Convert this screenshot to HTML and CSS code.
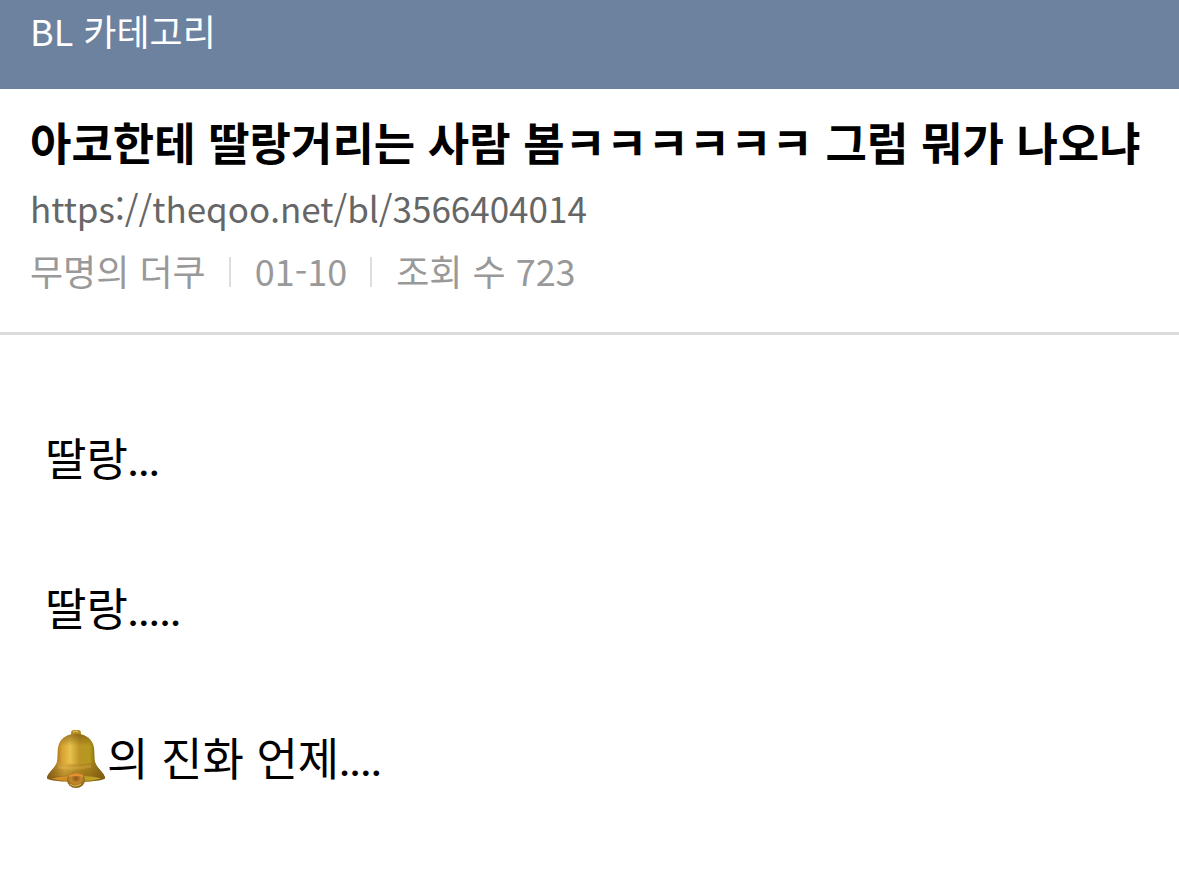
FILE: index.html
```html
<!DOCTYPE html>
<html lang="ko">
<head>
<meta charset="UTF-8">
<meta name="viewport" content="width=device-width, initial-scale=1">
<title>BL 카테고리</title>
<link rel="stylesheet" href="styles.css">
</head>
<body>
<header class="board-bar">BL 카테고리</header>
<main>
    <article>
        <div class="post-head">
            <h1>아코한테 딸랑거리는 사람 봄ㅋㅋㅋㅋㅋㅋ 그럼 뭐가 나오냐</h1>
            <a class="post-url" href="https://theqoo.net/bl/3566404014">https://theqoo.net/bl/3566404014</a>
            <div class="post-meta">
                <span>무명의 더쿠</span>
                <span>01-10</span>
                <span>조회 수 723</span>
            </div>
        </div>
        <div class="post-body">
            <p>딸랑<span class="dots">...</span></p>
            <p>딸랑<span class="dots">.....</span></p>
            <p><svg class="bell" viewBox="0 0 60 60" role="img" aria-label="종">
                <defs>
                    <linearGradient id="gold" x1="0" x2="1">
                        <stop offset=".12" stop-color="#8f6418"/>
                        <stop offset=".26" stop-color="#d9a133"/>
                        <stop offset=".4" stop-color="#e8c24c"/>
                        <stop offset=".56" stop-color="#bd9426"/>
                        <stop offset=".74" stop-color="#b39a1c"/>
                        <stop offset=".88" stop-color="#75590f"/>
                    </linearGradient>
                    <linearGradient id="rim" x1="0" x2="1">
                        <stop offset="0" stop-color="#8a6218"/>
                        <stop offset=".3" stop-color="#e0af40"/>
                        <stop offset=".6" stop-color="#b98a20"/>
                        <stop offset="1" stop-color="#8c6a18"/>
                    </linearGradient>
                    <linearGradient id="shade" x1="0" y1="0" x2="0" y2="1">
                        <stop offset="0" stop-color="#6f4d0b" stop-opacity=".6"/>
                        <stop offset=".25" stop-color="#6f4d0b" stop-opacity="0"/>
                        <stop offset=".6" stop-color="#6f4d0b" stop-opacity="0"/>
                        <stop offset="1" stop-color="#6f4d0b" stop-opacity=".5"/>
                    </linearGradient>
                    <radialGradient id="clapper" cx=".5" cy=".4" r=".6">
                        <stop offset="0" stop-color="#8b5318"/>
                        <stop offset=".5" stop-color="#c58a2c"/>
                        <stop offset="1" stop-color="#7d5c14"/>
                    </radialGradient>
                </defs>
                <rect x="25" y="1" width="10" height="8" rx="3" fill="#b18b22"/>
                <path d="M27 3q3-2 5 0" fill="none" stroke="#eed06b" stroke-width="1"/>
                <path d="M11 33C12 26 11 20 13 15C16 8 22 5 30 5S44 8 47 15C49 20 48 26 49 33C51 40 59 44 59 49.500C53 54 7 54 1 49.500C1 44 9 40 11 33Z" fill="url(#gold)"/>
                <path d="M11 33Q30 38 49 33C51 40 59 44 59 49.500Q30 42 1 49.500C1 44 9 40 11 33Z" fill="url(#rim)" opacity=".85"/>
                <path d="M11 33C12 26 11 20 13 15C16 8 22 5 30 5S44 8 47 15C49 20 48 26 49 33C51 40 59 44 59 49.500C53 54 7 54 1 49.500C1 44 9 40 11 33Z" fill="url(#shade)"/>
                <path d="M12 38Q28 41 45 37" fill="none" stroke="#edcd66" stroke-width="3" opacity=".25"/>
                <path d="M2 49.500Q30 43 58 49.500Q30 56 2 49.500Z" fill="#8d6518"/>
                <path d="M5 49.500Q18 46 29 47L25 52Q14 52 5 49.500Z" fill="#d18e2b"/>
                <path d="M36 47Q49 47 55 49.500Q47 52 37 52Z" fill="#bba025"/>
                <ellipse cx="30" cy="51" rx="9" ry="8" fill="url(#clapper)"/>
                <path d="M23 47Q30 45 37 47" fill="none" stroke="#e7912f" stroke-width="2"/>
                <path d="M24 55Q29 59 35 55" fill="none" stroke="#dfbd55" stroke-width="1"/>
            </svg>의 진화 언제<span class="dots">....</span></p>
        </div>
    </article>
</main>
</body>
</html>
```
FILE: styles.css
```css
* {
    box-sizing: border-box;
}
body {
    margin: 0;
    background: #fff;
    color: #000;
    font-family: "Noto Sans CJK KR", sans-serif;
}
.board-bar {
    padding: 3px 30px 32px;
    background: #6c829f;
    color: #fff;
    font-size: 36px;
    line-height: 54px;
}
.post-head {
    padding: 20px 30px 32px;
    border-bottom: 3px solid #dbdbdb;
}
h1 {
    margin: 0;
    font-size: 45px;
    line-height: 66px;
    font-weight: bold;
}
.post-url {
    display: block;
    color: #666;
    font-size: 35px;
    line-height: 65px;
    text-decoration: none;
}
.post-meta {
    display: flex;
    align-items: center;
    color: #999;
    font-size: 36px;
    line-height: 60px;
}
.post-meta span + span {
    display: flex;
    align-items: center;
}
.post-meta span + span::before {
    content: "";
    width: 2px;
    height: 30px;
    margin: 4px 24px 0 23px;
    background: #ddd;
}
.post-body {
    padding: 84px 45px 0;
    font-size: 45px;
    line-height: 75px;
}
.post-body p {
    margin: 0 0 75px;
}
.post-body p:last-child {
    margin-bottom: 0;
}
.dots {
    font-family: Lato, sans-serif;
    line-height: 1;
}
.bell {
    width: 60px;
    height: 60px;
    margin: 0 1px;
    vertical-align: -13px;
}
```
